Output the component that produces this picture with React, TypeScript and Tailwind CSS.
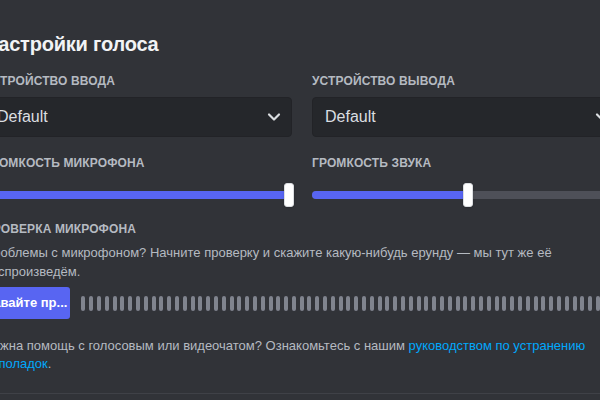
import { ChevronDown } from 'lucide-react'

const FONT = { fontFamily: '"Liberation Sans", Arial, sans-serif' }

function Label({ children }: { children: React.ReactNode }) {
  return (
    <div className="text-[12px] leading-4 font-bold uppercase tracking-[0.01em] text-[#b5bac1]">
      {children}
    </div>
  )
}

function Select({ value, chevron }: { value: string; chevron?: boolean }) {
  return (
    <div className="mt-2 flex h-10 items-center justify-between rounded-[4px] border border-[#222327] bg-[#25272b] pl-3 pr-[7px]">
      <span className="text-[16px] text-[#dbdee1]">{value}</span>
      {chevron && <ChevronDown className="h-5 w-5 text-[#dbdee1]" strokeWidth={2.6} />}
    </div>
  )
}

function Slider({ pct }: { pct: number }) {
  return (
    <div className="relative mt-3 h-6">
      <div className="absolute inset-x-0 top-[8px] h-2 overflow-hidden rounded-[4px] bg-[#4e5058]">
        <div className="h-full bg-[#5865f2]" style={{ width: `${pct}%` }} />
      </div>
      <div
        className="absolute top-0 h-6 w-[10px] rounded-[3px] border border-[#dbdee1] bg-white shadow"
        style={{ left: `calc(${pct}% - 5px)` }}
      />
    </div>
  )
}

export default function App() {
  const bars = Array.from({ length: 72 })

  return (
    <div className="h-[400px] w-[600px] overflow-hidden bg-[#313338]" style={FONT}>
      <div className="-ml-4 w-[636px] pt-8">
        <h2 className="text-[20px] leading-6 font-bold tracking-[-0.01em] text-[#f2f3f5]">Настройки голоса</h2>

        <div className="mt-[17px] grid grid-cols-2 gap-x-5">
          <div>
            <Label>Устройство ввода</Label>
            <Select value="Default" chevron />
          </div>
          <div>
            <Label>Устройство вывода</Label>
            <Select value="Default" chevron />
          </div>
        </div>

        <div className="mt-[18px] grid grid-cols-2 gap-x-5">
          <div>
            <Label>Громкость микрофона</Label>
            <Slider pct={99} />
          </div>
          <div>
            <Label>Громкость звука</Label>
            <Slider pct={50.6} />
          </div>
        </div>

        <div className="mt-[14px]">
          <Label>Проверка микрофона</Label>
          <p className="mt-[6px] text-[13px] leading-[19px] text-[#b5bac1]">
            Проблемы с микрофоном? Начните проверку и скажите какую-нибудь ерунду — мы тут же её воспроизведём.
          </p>
          <div className="mt-[6px] flex items-center gap-[11px]">
            <button className="-ml-4 h-8 shrink-0 rounded-[3px] bg-[#5865f2] pl-4 pr-[3px] text-[13px] font-bold text-white">
              Давайте пр...
            </button>
            <div className="flex gap-[3.8px] overflow-hidden">
              {bars.map((_, i) => (
                <div key={i} className="h-[15px] w-[4px] shrink-0 rounded-[2px] bg-[#80848e]" />
              ))}
            </div>
          </div>
        </div>

        <p className="mt-[18px] text-[13px] leading-[18px] text-[#b5bac1]">
          Нужна помощь с голосовым или видеочатом? Ознакомьтесь с нашим{' '}
          <a className="text-[#00a8fc]">руководством по устранению неполадок</a>.
        </p>

        <div className="mt-5 border-t border-[#3f4147]" />
      </div>
    </div>
  )
}
